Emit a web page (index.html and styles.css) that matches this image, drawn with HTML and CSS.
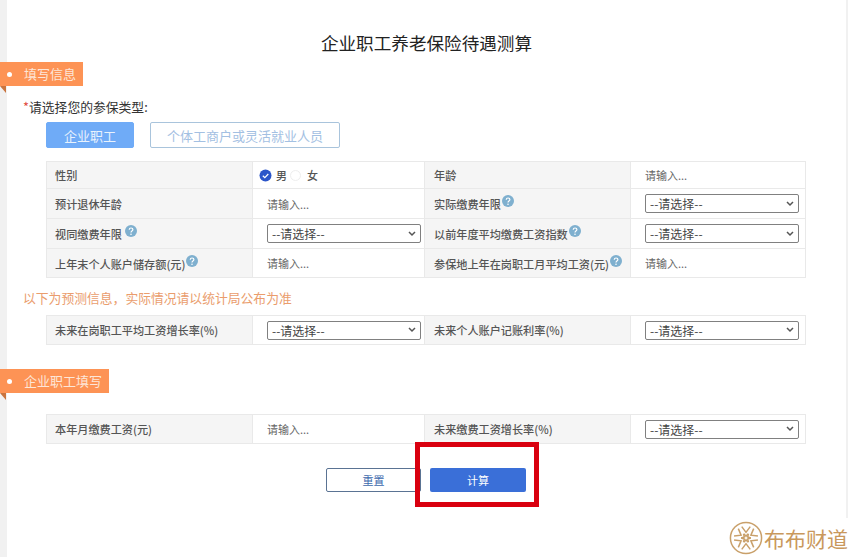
FILE: index.html
```html
<!DOCTYPE html>
<html lang="zh-CN">
<head>
    <meta charset="UTF-8">
    <meta name="viewport" content="width=device-width, initial-scale=1.0">
    <title>企业职工养老保险待遇测算</title>
    <link rel="stylesheet" href="styles.css">
</head>
<body>
    <svg class="icon-defs" width="0" height="0">
        <symbol id="help" viewBox="0 0 12 12">
            <circle cx="6" cy="6" r="6" fill="#7fb0cf"/>
            <path d="M4.2 4.7C4.3 3.6 5 3 6 3c1.100 0 1.900.6 1.900 1.600 0 1.500-1.900 1.400-1.900 2.800" fill="none" stroke="#fff" stroke-width="1.200"/>
            <circle cx="6" cy="9.200" r=".8" fill="#fff"/>
        </symbol>
    </svg>

    <div class="page">
        <h1 class="page-title">企业职工养老保险待遇测算</h1>

        <div class="section-tag">填写信息</div>

        <p class="question"><span class="required">*</span>请选择您的参保类型:</p>
        <div class="type-tabs">
            <button class="type-tab active">企业职工</button>
            <button class="type-tab wide">个体工商户或灵活就业人员</button>
        </div>

        <table class="form-table first">
            <tr class="row-27">
                <th>性别</th>
                <td>
                    <span class="radio-group">
                        <svg class="radio" width="13" height="13" viewBox="0 0 13 13">
                            <circle cx="6.500" cy="6.500" r="6" fill="#2b55c9"/>
                            <path d="M3.800 6.700l2 1.900 3.500-3.600" fill="none" stroke="#fff" stroke-width="1.200"/>
                        </svg>
                        <span class="radio-text">男</span>
                        <span class="radio-off"></span>
                        <span class="radio-text">女</span>
                    </span>
                </td>
                <th>年龄</th>
                <td class="narrow"><input class="text-input" placeholder="请输入..."></td>
            </tr>
            <tr class="row-30">
                <th>预计退休年龄</th>
                <td class="pad"><input class="text-input" placeholder="请输入..."></td>
                <th>实际缴费年限<svg class="help" width="12" height="12"><use href="#help"/></svg></th>
                <td class="narrow"><select class="pick"><option>--请选择--</option></select></td>
            </tr>
            <tr class="row-30">
                <th>视同缴费年限 <svg class="help" width="12" height="12"><use href="#help"/></svg></th>
                <td class="pad"><select class="pick"><option>--请选择--</option></select></td>
                <th>以前年度平均缴费工资指数<svg class="help" width="12" height="12"><use href="#help"/></svg></th>
                <td class="narrow"><select class="pick"><option>--请选择--</option></select></td>
            </tr>
            <tr class="row-29">
                <th>上年末个人账户储存额(元)<svg class="help" width="12" height="12"><use href="#help"/></svg></th>
                <td class="pad"><input class="text-input" placeholder="请输入..."></td>
                <th>参保地上年在岗职工月平均工资(元)<svg class="help" width="12" height="12"><use href="#help"/></svg></th>
                <td class="narrow"><input class="text-input" placeholder="请输入..."></td>
            </tr>
        </table>

        <p class="notice">以下为预测信息，实际情况请以统计局公布为准</p>

        <table class="form-table second">
            <tr class="row-29">
                <th>未来在岗职工平均工资增长率(%)</th>
                <td class="pad"><select class="pick"><option>--请选择--</option></select></td>
                <th>未来个人账户记账利率(%)</th>
                <td class="narrow"><select class="pick"><option>--请选择--</option></select></td>
            </tr>
        </table>

        <div class="section-tag lower">企业职工填写</div>

        <table class="form-table third">
            <tr class="row-29">
                <th>本年月缴费工资(元)</th>
                <td class="pad"><input class="text-input" placeholder="请输入..."></td>
                <th>未来缴费工资增长率(%)</th>
                <td class="narrow"><select class="pick"><option>--请选择--</option></select></td>
            </tr>
        </table>

        <div class="actions">
            <button class="btn-reset">重置</button>
            <div class="calc-wrap">
                <button class="btn-calc">计算</button>
                <div class="red-frame"></div>
            </div>
        </div>
    </div>

    <!-- Watermark -->
    <div class="watermark">
        <svg width="34" height="34" viewBox="0 0 36 36" fill="none" stroke="#c9a06a" stroke-width="1.600">
            <circle cx="18" cy="18" r="16.500"/>
            <g id="wedge">
                <path d="M13.500 6l4.500 6 4.500-6M15.500 13.500l2.500 2.500 2.500-2.500"/>
            </g>
            <use href="#wedge" transform="rotate(60 18 18)"/>
            <use href="#wedge" transform="rotate(120 18 18)"/>
            <use href="#wedge" transform="rotate(180 18 18)"/>
            <use href="#wedge" transform="rotate(240 18 18)"/>
            <use href="#wedge" transform="rotate(300 18 18)"/>
        </svg>
        <span class="watermark-text">布布财道</span>
    </div>
</body>
</html>
```

FILE: styles.css
```css
* {
    box-sizing: border-box;
}

html, body {
    height: 557px;
    overflow: hidden;
}

body {
    position: relative;
    margin: 0;
    background-color: #f1f1f1;
    font-family: "Noto Sans CJK SC", "Liberation Sans", sans-serif;
    color: #333;
}

.icon-defs {
    position: absolute;
}

.page {
    height: 557px;
    margin: 0 2px 0 7px;
    padding-top: 30px;
    background-color: #fff;
}

.page-title {
    margin: 0;
    font-size: 17.6px;
    font-weight: 400;
    line-height: 26px;
    text-align: center;
    color: #222;
}

/* Orange section tags */
.section-tag {
    position: relative;
    width: 83px;
    height: 24px;
    margin: 6px 0 0 -7px;
    padding-left: 24px;
    background-color: #fd9355;
    color: #fde6d8;
    font-size: 13px;
    line-height: 24px;
}

.section-tag::before {
    content: "";
    position: absolute;
    left: 7px;
    top: 10px;
    width: 5px;
    height: 5px;
    border-radius: 50%;
    background-color: #fff;
}

.section-tag::after {
    content: "";
    position: absolute;
    left: 0;
    top: 24px;
    border-top: 7px solid #c9743f;
    border-left: 6px solid transparent;
}

.section-tag.lower {
    width: 109px;
    margin-top: 24px;
}

.question {
    margin: 12px 0 0 16px;
    font-size: 12.8px;
    line-height: 18px;
}

.required {
    color: #e0453a;
}

.type-tabs {
    display: flex;
    gap: 16px;
    margin: 6px 0 0 39px;
}

.type-tab {
    width: 88px;
    height: 26px;
    border: 1px solid #a9c4dc;
    border-radius: 2px;
    background-color: #fff;
    color: #a3c0e2;
    font-family: inherit;
    font-size: 13px;
    padding: 0;
}

.type-tab.active {
    border-color: #6fabf7;
    background-color: #6fabf7;
    color: #e8f2fd;
}

.type-tab.wide {
    width: 190px;
}

/* Form tables */
.form-table {
    width: 760px;
    margin-left: 39px;
    border-collapse: collapse;
    table-layout: fixed;
    font-size: 11.15px;
}

.form-table.first {
    margin-top: 13px;
}

.form-table.second {
    margin-top: 8px;
}

.form-table.third {
    margin-top: 21px;
}

.form-table th,
.form-table td {
    border: 1px solid #e9e9e9;
    padding: 0;
}

.form-table th {
    width: 206px;
    padding-left: 8px;
    background-color: #f5f5f5;
    color: #555;
    font-weight: 500;
    text-align: left;
    white-space: nowrap;
}

.form-table th:nth-child(3) {
    padding-left: 9px;
}

.form-table td {
    width: 172px;
}

.form-table td.narrow {
    width: 175px;
    padding-left: 14px;
}

.form-table td.pad {
    padding-left: 14px;
}

.row-27 {
    height: 27px;
}

.row-29 {
    height: 29px;
}

.row-30 {
    height: 30px;
}

.help {
    margin-left: 1px;
    vertical-align: 2px;
}

.text-input {
    width: 140px;
    height: 20px;
    padding: 0;
    border: none;
    outline: none;
    font-family: inherit;
    font-size: 11px;
}

.text-input::placeholder {
    color: #666;
    opacity: 1;
}

.pick {
    display: block;
    width: 154px;
    height: 19px;
    padding: 0 0 0 4px;
    font-family: inherit;
    font-size: 12px;
    line-height: 17px;
    color: #444;
    appearance: none;
    background: #fff url("data:image/svg+xml,%3Csvg xmlns='http://www.w3.org/2000/svg' width='8' height='6'%3E%3Cpath d='M1 1l3 3 3-3' fill='none' stroke='%23555' stroke-width='1.500'/%3E%3C/svg%3E") no-repeat right 4px center;
    border: 1px solid #808080;
    border-radius: 2px;
}

.radio-group {
    display: flex;
    align-items: center;
    padding-left: 6px;
}

.radio-text {
    margin-left: 4px;
    color: #555;
    font-size: 11px;
    font-weight: 500;
}

.radio-off {
    width: 11px;
    height: 11px;
    margin-left: 3px;
    border: 1px solid #eee;
    border-radius: 50%;
    margin-right: 2px;
}

.notice {
    margin: 11px 0 0 16px;
    font-size: 12.8px;
    line-height: 18px;
    color: #ea9d6d;
}

/* Bottom buttons */
.actions {
    display: flex;
    justify-content: center;
    gap: 9px;
    margin-top: 24px;
    padding-right: 1px;
}

.btn-reset,
.btn-calc {
    display: block;
    width: 95px;
    height: 24px;
    padding: 0;
    border-radius: 2px;
    font-family: inherit;
    font-size: 11px;
}

.btn-reset {
    border: 1px solid #5a7393;
    background-color: #fff;
    color: #3c68ad;
}

.btn-calc {
    width: 96px;
    border: none;
    background-color: #3a6fd8;
    color: #fff;
}

.calc-wrap {
    position: relative;
}

.red-frame {
    position: absolute;
    left: -15px;
    right: -13px;
    top: -26px;
    bottom: -15px;
    border: 5px solid #d9000f;
    pointer-events: none;
}

/* Watermark, lies over the right strip */
.watermark {
    position: absolute;
    right: 0;
    bottom: 0;
    display: flex;
    align-items: center;
    gap: 1px;
    height: 39px;
    padding-left: 8px;
    background-color: #fff;
}

.watermark-text {
    font-size: 21px;
    color: #c9985c;
    white-space: nowrap;
}
```
